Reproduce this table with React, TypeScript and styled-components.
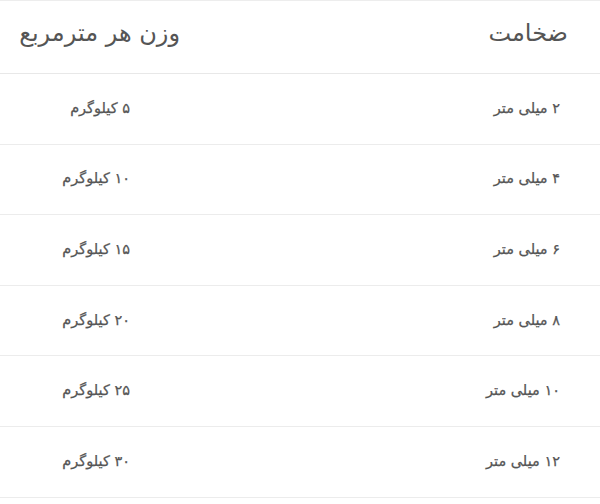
import React from 'react';
import styled, { createGlobalStyle } from 'styled-components';

const GlobalStyle = createGlobalStyle`
  html, body {
    margin: 0;
    padding: 0;
    background: #ffffff;
  }
`;

type Row = {
  thickness: string;
  weight: string;
};

const rows: Row[] = [
  { thickness: '۲ میلی متر', weight: '۵ کیلوگرم' },
  { thickness: '۴ میلی متر', weight: '۱۰ کیلوگرم' },
  { thickness: '۶ میلی متر', weight: '۱۵ کیلوگرم' },
  { thickness: '۸ میلی متر', weight: '۲۰ کیلوگرم' },
  { thickness: '۱۰ میلی متر', weight: '۲۵ کیلوگرم' },
  { thickness: '۱۲ میلی متر', weight: '۳۰ کیلوگرم' },
];

const Table = styled.table`
  direction: rtl;
  width: 600px;
  table-layout: fixed;
  border-collapse: collapse;
  border-top: 1px solid #ededed;
  font-family: 'DejaVu Sans', 'Noto Sans', sans-serif;
  color: #555555;
`;

const HeadRow = styled.tr`
  height: 73px;
  border-bottom: 1px solid #e8e8e8;
`;

const BodyRow = styled.tr`
  height: 70.6px;
  border-bottom: 1px solid #ececec;
`;

const HeadCell = styled.th`
  text-align: right;
  font-weight: normal;
  font-size: 24px;
  color: #555555;
  padding: 0 32px 8px 0;
  vertical-align: middle;
`;

const Cell = styled.td<{ $pad: number }>`
  text-align: right;
  font-size: 14.5px;
  color: #555555;
  -webkit-text-stroke: 0.25px #555555;
  padding: 0 ${({ $pad }) => $pad}px 2px 0;
  vertical-align: middle;
`;

export default function App() {
  return (
    <>
      <GlobalStyle />
      <Table>
        <colgroup>
          <col style={{ width: 388 }} />
          <col style={{ width: 212 }} />
        </colgroup>
        <thead>
          <HeadRow>
            <HeadCell>ضخامت</HeadCell>
            <HeadCell>وزن هر مترمربع</HeadCell>
          </HeadRow>
        </thead>
        <tbody>
          {rows.map((r) => (
            <BodyRow key={r.thickness}>
              <Cell $pad={40}>{r.thickness}</Cell>
              <Cell $pad={82}>{r.weight}</Cell>
            </BodyRow>
          ))}
        </tbody>
      </Table>
    </>
  );
}
